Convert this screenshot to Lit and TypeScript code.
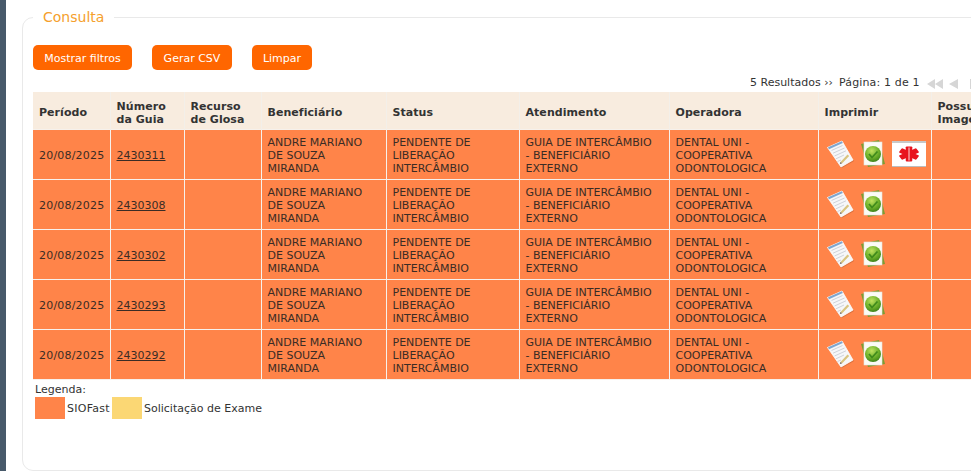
import { LitElement, html, css, svg } from "lit";
import { customElement } from "lit/decorators.js";

const noteIcon = svg`<svg class="ic" viewBox="0 0 27 28" width="27" height="28">
  <path d="M0.5 7.5 L15 1 L26.5 20.5 L14 27.5 Z" fill="#000" opacity=".14" transform="translate(.4 .7)"/>
  <path d="M0.5 7.5 L15 1 L26 20 L14 27 Z" fill="#f6f7f9" stroke="#fff" stroke-width=".8"/>
  <path d="M1 7.3 L14.8 1.2 L15.8 2.9 L2 9.2 Z" fill="#7ea6cf"/>
  <path d="M4.5 10.5 L15.5 5.5 M6 13.2 L17.5 8 M7.5 16 L19 10.8 M9 18.8 L17 15 M10.5 21.5 L14 20" stroke="#c9ced6" stroke-width=".9"/>
  <path d="M13.5 22 L20.5 14.5 L22.2 16 L15.2 23.2 Z" fill="#d9c47e"/>
  <path d="M13.5 22 L12.8 24 L15.2 23.2 Z" fill="#6b5f4a"/>
</svg>`;

const checkIcon = svg`<svg class="ic check" viewBox="0 0 24 29" width="24" height="29">
  <defs><radialGradient id="gb" cx=".42" cy=".3" r=".8"><stop offset="0" stop-color="#bfe25f"/><stop offset=".55" stop-color="#6cb02a"/><stop offset="1" stop-color="#2f7514"/></radialGradient></defs>
  <path d="M0 5 L18 1 L24 25 L7 28 Z" fill="#7d9c32"/>
  <rect x="3" y="3" width="18" height="23" fill="#fbfbf5" stroke="#e4e4dc" stroke-width=".6"/>
  <circle cx="12" cy="15" r="8" fill="url(#gb)"/>
  <path d="M8 15 L11 18.5 L16.5 12.5" fill="none" stroke="#3f8a1c" stroke-width="1.8"/>
</svg>`;

const medIcon = svg`<svg class="ic med" viewBox="0 0 34 26" width="34" height="26">
  <rect width="34" height="26" fill="#fff"/>
  <rect width="34" height="2" fill="#c8c8c8"/><rect y="25" width="34" height="1" fill="#bdbdbd"/>
  <g fill="#e8141e" transform="translate(17 13) scale(1.25 .95)">
    <rect x="-2.6" y="-8" width="5.2" height="16" rx=".8"/>
    <rect x="-2.6" y="-8" width="5.2" height="16" rx=".8" transform="rotate(60)"/>
    <rect x="-2.6" y="-8" width="5.2" height="16" rx=".8" transform="rotate(120)"/>
  </g>
  <path d="M17 6.5 V19.5" stroke="#ffd9d9" stroke-width="1" fill="none"/>
</svg>`;

const rows = ["2430311", "2430308", "2430302", "2430293", "2430292"];
const widths = [77, 74, 77, 125, 133, 150, 149, 113, 100];

@customElement("app-root")
export class AppRoot extends LitElement {
  static styles = css`
    :host {
      display: block;
      height: 471px;
      overflow: hidden;
      background: #fff;
      font-family: "DejaVu Sans", Verdana, sans-serif;
      font-size: 11px;
      color: #333;
    }
    .page { display: flex; height: 471px; }
    .rail { width: 6px; flex: none; background: #47596a; }
    .main { flex: 1; min-width: 0; padding: 0 0 0 16px; }
    fieldset {
      box-sizing: border-box;
      margin: 8px -40px 0 0;
      padding: 0 0 0 10px;
      height: 463px;
      border: 1px solid #e9e9e9;
      border-radius: 11px;
    }
    legend {
      margin-left: 0;
      padding: 0 10px;
      font-size: 14px;
      line-height: 18px;
      color: #f5a02c;
    }
    .actions { display: flex; gap: 20px; margin-top: 19px; }
    button {
      height: 25px;
      padding: 1px 0 0;
      border: 0;
      border-radius: 5px;
      background: #ff6600;
      color: #fff;
      font: 11px "DejaVu Sans", Verdana, sans-serif;
    }
    .b1 { width: 99px; }
    .b2 { width: 80px; }
    .b3 { width: 60px; }
    .pager {
      display: flex;
      align-items: center;
      height: 14px;
      margin-top: 6px;
      padding-left: 717px;
      white-space: nowrap;
      line-height: 14px;
      gap: 6px;
    }
    .pg { letter-spacing: .15px; }
    .arrows { display: block; flex: none; margin: 1px 0 0 1px; }
    table {
      border-collapse: collapse;
      table-layout: fixed;
      width: 998px;
      margin-top: 2px;
    }
    th {
      height: 33px;
      padding: 4px 5px 0 6px;
      background: #f8ecdf;
      border: 1px solid #f3efe9;
      border-top: 0;
      border-bottom: 0;
      text-align: left;
      font-weight: bold;
      line-height: 13px;
      letter-spacing: .05px;
    }
    td {
      height: 47px;
      padding: 2px 5px 0 6px;
      background: #ff8449;
      border: 1px solid #f6f1ec;
      line-height: 13px;
      color: #3a2c25;
    }
    tr td:first-child, tr th:first-child { border-left: 0; }
    td.date { letter-spacing: .2px; white-space: nowrap; padding-right: 0; }
    td.imp { height: 47px; padding: 0 5px 2px 6px; }
    a { color: #3a2c25; text-decoration: underline; }
    .icons { display: flex; align-items: center; height: 30px; padding-left: 2px; }
    .ic { display: block; flex: none; }
    .check { margin-left: 7px; }
    .med { margin-left: 7px; }
    .legend-title { margin: 3px 0 0 2px; line-height: 13px; }
    .legend { display: flex; align-items: center; height: 22px; margin: 1px 0 0 2px; }
    .swatch { width: 30px; height: 22px; flex: none; }
    .orange { background: #ff8449; margin-right: 2px; }
    .yellow { background: #fbd774; margin: 0 2px; }
    .sio { width: 43px; flex: none; letter-spacing: .25px; white-space: nowrap; }
  `;

  render() {
    return html`<div class="page">
      <div class="rail"></div>
      <div class="main">
        <fieldset>
          <legend>Consulta</legend>
          <div class="actions">
            <button class="b1">Mostrar filtros</button>
            <button class="b2">Gerar CSV</button>
            <button class="b3">Limpar</button>
          </div>
          <div class="pager">
            <span>5 Resultados ››</span><span class="pg">Página: 1 de 1</span>
            <svg class="arrows" width="48" height="12" viewBox="0 0 48 12" fill="#d6d6d6">
              <path d="M8 1 V11 L0 6 Z M16 1 V11 L8 6 Z M31 1 V11 L22 6 Z M43 1 H46 V11 H43 Z"/>
            </svg>
          </div>
          <table>
            <colgroup>${widths.map((w) => html`<col style="width:${w}px" />`)}</colgroup>
            <thead>
              <tr>
                <th>Período</th><th>Número<br />da Guia</th><th>Recurso<br />de Glosa</th>
                <th>Beneficiário</th><th>Status</th><th>Atendimento</th>
                <th>Operadora</th><th>Imprimir</th><th>Possui<br />Imagem</th>
              </tr>
            </thead>
            <tbody>
              ${rows.map((id, i) => html`<tr>
                <td class="date">20/08/2025</td>
                <td><a href="#">${id}</a></td>
                <td></td>
                <td>ANDRE MARIANO<br />DE SOUZA<br />MIRANDA</td>
                <td>PENDENTE DE<br />LIBERAÇÃO<br />INTERCÂMBIO</td>
                <td>GUIA DE INTERCÂMBIO<br />- BENEFICIÁRIO<br />EXTERNO</td>
                <td>DENTAL UNI -<br />COOPERATIVA<br />ODONTOLOGICA</td>
                <td class="imp"><div class="icons">${noteIcon}${checkIcon}${i === 0 ? medIcon : ""}</div></td>
                <td></td>
              </tr>`)}
            </tbody>
          </table>
          <div class="legend-title">Legenda:</div>
          <div class="legend">
            <span class="swatch orange"></span><span class="sio">SIOFast</span>
            <span class="swatch yellow"></span><span>Solicitação de Exame</span>
          </div>
        </fieldset>
      </div>
    </div>`;
  }
}
